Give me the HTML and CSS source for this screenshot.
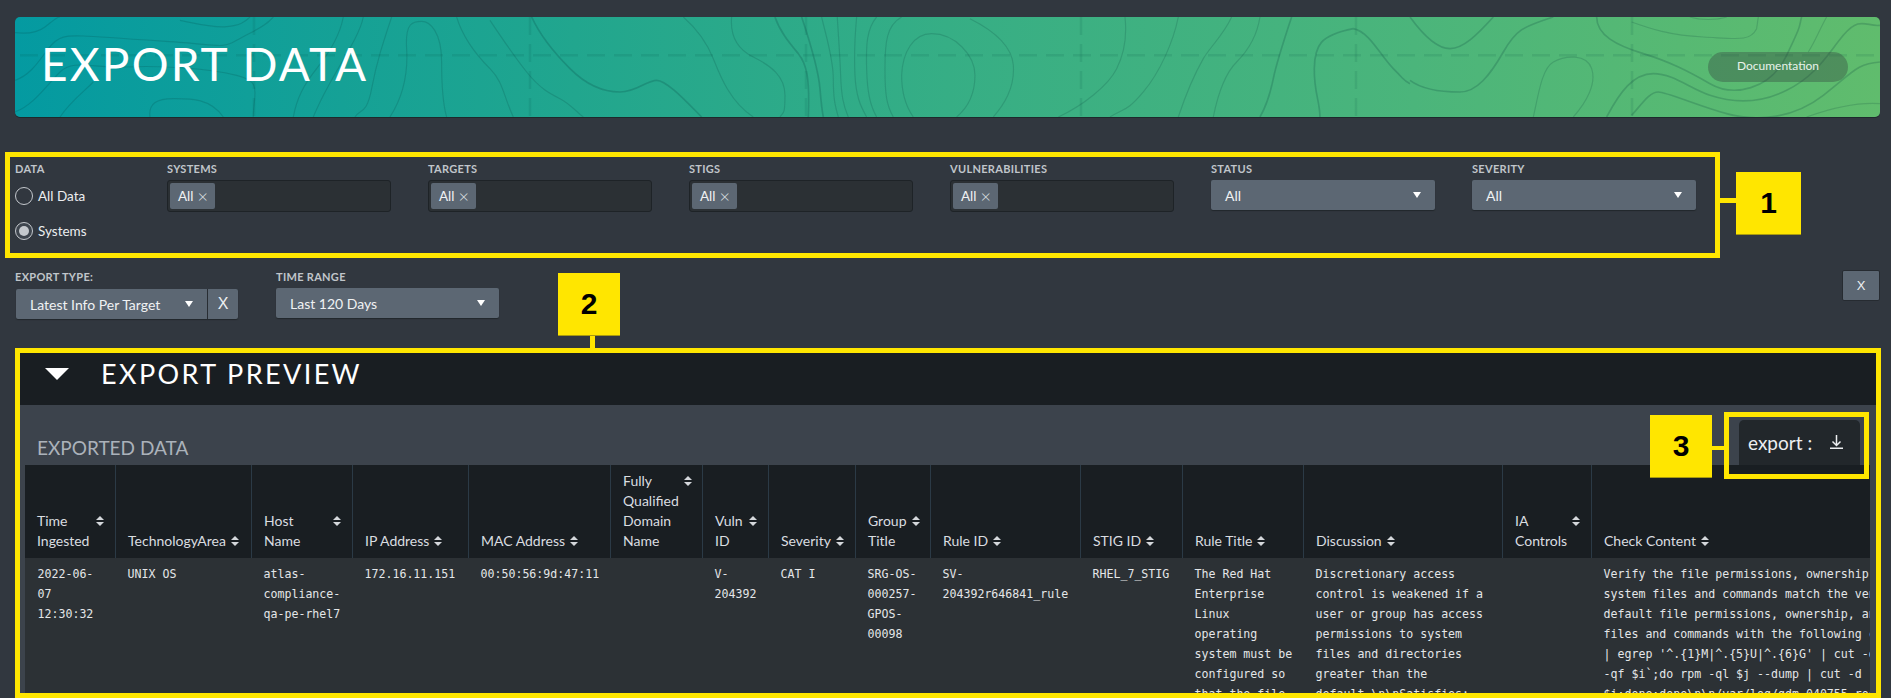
FILE: index.html
```html
<!DOCTYPE html>
<html lang="en">
<head>
<meta charset="utf-8">
<title>Export Data</title>
<link rel="stylesheet" href="styles.css">
</head>
<body>
<header class="banner">
  <svg class="topo" viewBox="0 0 1865 100" width="1865" height="100" aria-hidden="true">
    <g class="dash">
      <path d="M5 38.3H1860"/>
      <path d="M239 0V100M515 0V100M791 0V100M1066 0V100M1341 0V100M1617 0V100"/>
    </g>
    <g class="lines" transform="translate(-5 -5) scale(.3333)">
      <path d="M15 62C50 66 85 60 105 45S140 15 150 15"/>
      <path d="M15 205C60 190 85 150 115 110S170 70 220 72S420 85 520 92S640 110 680 85S760 50 790 15"/>
      <path d="M15 300C70 280 110 220 150 180S250 170 350 165S600 170 680 190S730 240 730 315"/>
      <path d="M510 25C560 35 610 48 650 44S705 30 720 15"/>
      <path d="M150 315C180 270 220 240 250 210"/>
      <path d="M420 315C415 275 440 260 490 260S600 258 640 315"/>
      <path d="M1000 15C990 70 960 120 920 170S860 260 850 315"/>
      <path d="M1060 15C1045 90 960 190 910 315"/>
      <path d="M1145 15C1120 90 1100 150 1085 230S1050 290 1035 315"/>
      <path d="M1140 315C1175 260 1195 190 1190 110S1210 28 1235 28S1295 60 1295 150S1300 280 1310 315"/>
      <path d="M1340 15C1360 80 1400 130 1440 170S1480 250 1510 315"/>
    </g>
    <g class="lines" transform="translate(475 -5) scale(.3333)">
      <path d="M0 25C40 85 70 130 110 180S180 245 210 260S260 300 280 315"/>
      <path class="bold" d="M125 15C150 70 190 120 240 170S340 240 390 240S470 205 500 205S590 270 635 315"/>
      <path d="M580 15C620 50 650 90 670 140S720 270 790 315"/>
      <path d="M725 15C720 70 740 110 790 135S885 190 885 250S880 300 870 315"/>
      <path class="bold" d="M855 15C870 60 900 95 925 125S960 200 955 315"/>
      <path class="bold" d="M935 15C960 90 985 170 990 230S995 290 1000 315"/>
      <path d="M995 15C1010 80 1030 140 1030 200S1035 280 1045 315"/>
      <path d="M1042 15C1045 70 1050 130 1052 190S1060 280 1075 315"/>
      <path d="M1100 15C1095 70 1092 130 1095 190S1110 280 1130 315"/>
      <path d="M1160 15C1130 50 1128 100 1130 170S1140 280 1160 315"/>
      <path d="M1235 15C1190 40 1185 90 1185 170S1190 280 1210 315"/>
      <path d="M1270 315C1245 280 1235 240 1235 190C1238 120 1270 65 1325 65C1395 65 1455 130 1455 190C1455 250 1430 290 1400 315"/>
    </g>
    <g class="lines" transform="translate(955 -5) scale(.3333)">
      <path d="M0 20C50 45 125 90 130 160S100 280 70 315"/>
      <path d="M465 15C470 60 465 120 440 170S340 280 265 315"/>
      <path d="M625 15C610 90 570 180 520 240S460 290 420 315"/>
      <path d="M785 15C760 70 720 105 700 140S650 240 625 315"/>
      <path d="M870 15C860 80 830 120 800 150S745 240 730 315"/>
      <path class="bold" d="M965 15C940 90 920 150 910 200S890 280 870 315"/>
      <path class="bold" d="M1050 315C1050 270 1032 240 1033 170S1050 70 1150 50C1200 60 1230 130 1270 170S1300 205 1320 215"/>
    </g>
    <g class="lines" transform="translate(1395 -5) scale(.3333)">
      <path class="bold" d="M0 205C40 235 100 240 150 240S240 190 280 120S340 45 430 15"/>
      <path class="bold" d="M0 15C40 70 80 110 120 110S200 70 250 15"/>
      <path d="M370 315C385 250 395 170 430 150S530 125 545 170S530 270 490 315"/>
      <path class="bold" d="M560 15C560 70 620 100 700 125S830 175 900 215S1080 235 1130 130S1165 50 1175 15"/>
      <path d="M665 30C720 50 780 70 880 75S1020 90 1040 50L1045 15"/>
      <path d="M840 15C870 25 920 25 950 15"/>
      <path class="bold" d="M590 315C630 240 670 185 730 185S840 230 900 250S1040 280 1130 235S1250 130 1300 70S1370 45 1410 40"/>
      <path class="bold" d="M665 310C700 270 720 240 745 240S860 280 950 305S1150 320 1240 250S1340 155 1410 150"/>
      <path d="M1250 15C1230 50 1215 90 1195 120"/>
      <path d="M1190 315C1260 290 1340 270 1410 275"/>
    </g>
  </svg>
  <h1 class="banner-title">EXPORT DATA</h1>
  <a class="doc-btn">Documentation</a>
</header>

<section class="filters">
  <div class="data-col">
    <div class="label">DATA</div>
    <label class="radio"><span class="ring"></span>All Data</label>
    <label class="radio"><span class="ring on"></span>Systems</label>
  </div>
  <div class="field">
    <div class="label">SYSTEMS</div>
    <div class="multi"><span class="tag">All <span class="tag-x">×</span></span></div>
  </div>
  <div class="field">
    <div class="label">TARGETS</div>
    <div class="multi"><span class="tag">All <span class="tag-x">×</span></span></div>
  </div>
  <div class="field">
    <div class="label">STIGS</div>
    <div class="multi"><span class="tag">All <span class="tag-x">×</span></span></div>
  </div>
  <div class="field">
    <div class="label">VULNERABILITIES</div>
    <div class="multi"><span class="tag">All <span class="tag-x">×</span></span></div>
  </div>
  <div class="field">
    <div class="label">STATUS</div>
    <div class="select"><span>All</span><i class="caret"></i></div>
  </div>
  <div class="field">
    <div class="label">SEVERITY</div>
    <div class="select"><span>All</span><i class="caret"></i></div>
  </div>
</section>

<section class="export-row">
  <div class="type-field">
    <div class="label">EXPORT TYPE:</div>
    <div class="joined">
      <div class="select type-select"><span>Latest Info Per Target</span><i class="caret"></i></div>
      <button class="clear">X</button>
    </div>
  </div>
  <div class="range-field">
    <div class="label">TIME RANGE</div>
    <div class="select"><span>Last 120 Days</span><i class="caret"></i></div>
  </div>
  <button class="close-all">X</button>
</section>

<section class="preview">
  <div class="preview-head">
    <svg class="preview-caret" viewBox="0 0 24 12" width="24" height="12" aria-hidden="true"><path d="M0 0H24L12 12Z"/></svg>
    <h2>EXPORT PREVIEW</h2>
  </div>
  <div class="panel">
    <div class="panel-head">
      <h3>EXPORTED DATA</h3>
      <button class="export-btn">export :
        <svg viewBox="0 0 15 14" width="15" height="14" aria-hidden="true"><path d="M7.5 0V10M3.5 6.5L7.5 10.5L11.5 6.5M1 13.2H14"/></svg>
      </button>
    </div>
    <div class="table-wrap">
      <table class="grid">
        <colgroup>
          <col class="c1"><col class="c2"><col class="c3"><col class="c4"><col class="c5"><col class="c6"><col class="c7"><col class="c8"><col class="c9"><col class="c10"><col class="c11"><col class="c12"><col class="c13"><col class="c14"><col class="c15">
        </colgroup>
        <thead>
          <tr>
            <th><div class="th"><span>Time<br>Ingested</span><svg class="sort" viewBox="0 0 8 10"><path d="M4 0L8 4H0ZM4 10L0 6H8Z"/></svg></div></th>
            <th><div class="th"><span>TechnologyArea</span><svg class="sort" viewBox="0 0 8 10"><path d="M4 0L8 4H0ZM4 10L0 6H8Z"/></svg></div></th>
            <th><div class="th"><span>Host<br>Name</span><svg class="sort" viewBox="0 0 8 10"><path d="M4 0L8 4H0ZM4 10L0 6H8Z"/></svg></div></th>
            <th><div class="th"><span>IP Address</span><svg class="sort" viewBox="0 0 8 10"><path d="M4 0L8 4H0ZM4 10L0 6H8Z"/></svg></div></th>
            <th><div class="th"><span>MAC Address</span><svg class="sort" viewBox="0 0 8 10"><path d="M4 0L8 4H0ZM4 10L0 6H8Z"/></svg></div></th>
            <th><div class="th"><span>Fully<br>Qualified<br>Domain<br>Name</span><svg class="sort" viewBox="0 0 8 10"><path d="M4 0L8 4H0ZM4 10L0 6H8Z"/></svg></div></th>
            <th><div class="th"><span>Vuln<br>ID</span><svg class="sort" viewBox="0 0 8 10"><path d="M4 0L8 4H0ZM4 10L0 6H8Z"/></svg></div></th>
            <th><div class="th"><span>Severity</span><svg class="sort" viewBox="0 0 8 10"><path d="M4 0L8 4H0ZM4 10L0 6H8Z"/></svg></div></th>
            <th><div class="th"><span>Group<br>Title</span><svg class="sort" viewBox="0 0 8 10"><path d="M4 0L8 4H0ZM4 10L0 6H8Z"/></svg></div></th>
            <th><div class="th"><span>Rule ID</span><svg class="sort" viewBox="0 0 8 10"><path d="M4 0L8 4H0ZM4 10L0 6H8Z"/></svg></div></th>
            <th><div class="th"><span>STIG ID</span><svg class="sort" viewBox="0 0 8 10"><path d="M4 0L8 4H0ZM4 10L0 6H8Z"/></svg></div></th>
            <th><div class="th"><span>Rule Title</span><svg class="sort" viewBox="0 0 8 10"><path d="M4 0L8 4H0ZM4 10L0 6H8Z"/></svg></div></th>
            <th><div class="th"><span>Discussion</span><svg class="sort" viewBox="0 0 8 10"><path d="M4 0L8 4H0ZM4 10L0 6H8Z"/></svg></div></th>
            <th><div class="th"><span>IA<br>Controls</span><svg class="sort" viewBox="0 0 8 10"><path d="M4 0L8 4H0ZM4 10L0 6H8Z"/></svg></div></th>
            <th><div class="th"><span>Check Content</span><svg class="sort" viewBox="0 0 8 10"><path d="M4 0L8 4H0ZM4 10L0 6H8Z"/></svg></div></th>
          </tr>
        </thead>
        <tbody>
          <tr>
            <td>2022-06-07 12:30:32</td>
            <td>UNIX OS</td>
            <td>atlas-compliance-qa-pe-rhel7</td>
            <td>172.16.11.151</td>
            <td>00:50:56:9d:47:11</td>
            <td></td>
            <td>V-204392</td>
            <td>CAT I</td>
            <td>SRG-OS-000257-GPOS-00098</td>
            <td>SV-204392r646841_rule</td>
            <td>RHEL_7_STIG</td>
            <td>The Red Hat Enterprise Linux operating system must be configured so that the file permissions, ownership, and group membership of system files and commands match the vendor values.</td>
            <td>Discretionary access control is weakened if a user or group has access permissions to system files and directories greater than the default.\n\nSatisfies: SRG-OS-000257-GPOS-00098</td>
            <td></td>
            <td class="check">Verify the file permissions, ownership, and group membership of<br>system files and commands match the vendor values.\n\nCheck the<br>default file permissions, ownership, and group membership of system<br>files and commands with the following command:\n\n# for i in `rpm -Va<br>| egrep '^.{1}M|^.{5}U|^.{6}G' | cut -d " " -f 4,5`;do for j in `rpm<br>-qf $i`;do rpm -ql $j --dump | cut -d " " -f 1,5,6,7 | grep<br>$i;done;done\n\n/var/log/gdm 040755 root root</td>
          </tr>
        </tbody>
      </table>
    </div>
  </div>
</section>

<div class="hl hl-filters"></div>
<div class="hl hl-preview"></div>
<div class="hl hl-export"></div>
<div class="wire wire-1"></div>
<div class="wire wire-2"></div>
<div class="wire wire-3"></div>
<div class="num num-1">1</div>
<div class="num num-2">2</div>
<div class="num num-3">3</div>
</body>
</html>
```

FILE: styles.css
```css
* { box-sizing: border-box; }
html, body { margin: 0; height: 698px; overflow: hidden; }
body {
  position: relative;
  background: #31373f;
  color: #e6e8ea;
  font-family: Lato, "Liberation Sans", sans-serif;
  font-size: 14px;
  padding: 17px 11px 0 15px;
}

/* banner */
.banner {
  position: relative;
  height: 100px;
  display: flex;
  align-items: center;
  justify-content: space-between;
  padding: 0 32px 0 26px;
  border-radius: 5px;
  overflow: hidden;
  background: linear-gradient(90deg, #049aa1 0%, #21a68e 30%, #36ae85 50%, #4bb57b 75%, #60bc6d 100%);
  box-shadow: 0 1px 0 #1d2a2c;
}
.topo { position: absolute; left: 0; top: 0; }
.topo path { fill: none; }
.dash path { stroke: rgba(0, 70, 60, .11); stroke-width: 2.5; stroke-dasharray: 18 9; }
.lines path { stroke: rgba(0, 55, 55, .17); stroke-width: 3.5; }
.lines path.bold { stroke-width: 5; stroke: rgba(0, 55, 55, .2); }
.banner-title {
  position: relative;
  margin: 0 0 7px;
  font-weight: 400;
  font-size: 46px;
  line-height: 50px;
  letter-spacing: 2.2px;
  color: #fff;
}
.doc-btn {
  position: relative;
  width: 140px;
  height: 30px;
  border-radius: 15px;
  background: rgba(50, 65, 60, .36);
  color: #e8f2ea;
  font-size: 12px;
  line-height: 28px;
  text-align: center;
}

/* filter rows */
.label {
  font-size: 11px;
  font-weight: 700;
  line-height: 14px;
  color: #c0c5ca;
  letter-spacing: .3px;
}
.filters {
  display: flex;
  margin-top: 45px;
  height: 101px;
}
.data-col { width: 152px; }
.radio {
  display: flex;
  align-items: center;
  gap: 5px;
  height: 18px;
  margin-top: 17px;
  font-size: 13.5px;
  color: #eceef0;
}
.data-col .label + .radio { margin-top: 11px; }
.ring {
  width: 18px;
  height: 18px;
  border: 1px solid #c4c8cd;
  border-radius: 50%;
  display: flex;
  align-items: center;
  justify-content: center;
}
.ring.on { background: #3e454e; }
.ring.on::after {
  content: "";
  width: 10px;
  height: 10px;
  border-radius: 50%;
  background: #c4c8cd;
}
.field { width: 224px; margin-right: 37px; }
.field .label { margin-bottom: 4px; }
.multi {
  height: 32px;
  padding: 2px;
  border: 1px solid #1e2327;
  border-radius: 3px;
  background: #2b3034;
}
.tag {
  display: inline-flex;
  align-items: center;
  gap: 4px;
  height: 26px;
  padding: 0 7px 0 8px;
  border-radius: 2px;
  background: #5c6773;
  color: #f0f2f3;
  font-size: 13.5px;
}
.tag-x { font-size: 18px; font-weight: 300; line-height: 26px; color: #dfe2e5; }
.select {
  display: flex;
  align-items: center;
  justify-content: space-between;
  height: 30px;
  margin-top: 1px;
  padding: 0 14px;
  border-radius: 2px;
  background: #5c6773;
  box-shadow: 0 1px 1px #22272c;
  color: #f0f2f3;
  font-size: 14px;
}
.caret {
  width: 0;
  height: 0;
  border-left: 4px solid transparent;
  border-right: 4px solid transparent;
  border-top: 6px solid #fff;
}
.export-row {
  display: flex;
  align-items: flex-start;
  margin-top: -1px;
  height: 91px;
}
.type-field { width: 261px; padding-top: 8px; }
.range-field { width: 223px; padding-top: 8px; }
.type-field .label, .range-field .label { margin-bottom: 4px; }
.joined { display: flex; margin-left: 1px; }
.type-select { width: 192px; margin-top: 1px; border-right: 1px solid #2a2f35; border-radius: 2px 0 0 2px; }
.clear {
  width: 30px;
  height: 30px;
  margin-top: 1px;
  padding: 0;
  border: 0;
  border-radius: 0 2px 2px 0;
  background: #5c6773;
  box-shadow: 0 1px 1px #22272c;
  color: #eef0f2;
  font: 400 16px "Liberation Sans", sans-serif;
}
.close-all {
  width: 38px;
  height: 31px;
  margin: 8px 0 0 auto;
  padding: 0;
  border: 1px solid #262b31;
  border-radius: 2px;
  background: #5c6773;
  color: #eef0f2;
  font: 400 13px "Liberation Sans", sans-serif;
}

/* preview */
.preview { margin: 0 0 0 5px; width: 1856px; }
.preview-head {
  display: flex;
  align-items: center;
  height: 52px;
  padding: 0 0 10px 25px;
  background: #191e22;
}
.preview-caret { fill: #fff; margin-right: 32px; }
.preview-head h2 {
  margin: 0;
  font-weight: 400;
  font-size: 27px;
  line-height: 32px;
  letter-spacing: 2.4px;
  color: #fff;
}
.panel { background: #3c434c; padding: 0 6px 0 5px; height: 400px; }
.panel-head {
  display: flex;
  justify-content: space-between;
  align-items: flex-end;
  height: 60px;
}
.panel-head h3 {
  margin: 0 0 6px 12px;
  font-weight: 400;
  font-size: 19px;
  line-height: 22px;
  color: #abb2ba;
}
.export-btn {
  display: flex;
  align-items: center;
  justify-content: space-between;
  width: 121px;
  height: 45px;
  margin-right: 10px;
  padding: 0 16px 1px 9px;
  border: 0;
  border-radius: 5px 5px 0 0;
  background: #22272b;
  color: #eceef0;
  font: 400 19px Lato, sans-serif;
}
.export-btn svg { fill: none; stroke: #eceef0; stroke-width: 1.5; }
.table-wrap { height: 340px; overflow: hidden; background: #2c3135; }
.grid { border-collapse: separate; border-spacing: 0; table-layout: fixed; width: 2445px; }
.c1 { width: 90px; } .c2 { width: 136px; } .c3 { width: 101px; } .c4 { width: 116px; }
.c5 { width: 142px; } .c6 { width: 92px; } .c7 { width: 66px; } .c8 { width: 87px; }
.c9 { width: 75px; } .c10 { width: 150px; } .c11 { width: 102px; } .c12 { width: 121px; }
.c13 { width: 199px; } .c14 { width: 89px; } .c15 { width: 879px; }
.grid th {
  height: 93px;
  padding: 6px 11px 7px 12px;
  vertical-align: bottom;
  text-align: left;
  font-weight: 400;
  font-size: 14px;
  line-height: 20px;
  color: #dadde0;
  background: #191e22;
  border-left: 1px solid #2b3a46;
}
.grid th:first-child { border-left: 0; }
.th { display: flex; gap: 5px; align-items: flex-start; }
.th > span { white-space: nowrap; }
.sort { flex: none; width: 8px; height: 10px; margin-top: 5px; fill: #d5d8dc; }
.th:has(br) .sort { margin-left: auto; }
.grid td {
  padding: 6px 9px 0 12.5px;
  vertical-align: top;
  font-family: "DejaVu Sans Mono", monospace;
  font-size: 11.6px;
  line-height: 20px;
  color: #e4e6e8;
}
.grid td.check { white-space: nowrap; }

/* annotations */
.hl { position: absolute; border: 5px solid #ffe600; pointer-events: none; }
.hl-filters { left: 5px; top: 152px; width: 1715px; height: 106px; }
.hl-preview { left: 15px; top: 348px; width: 1866px; height: 350px; }
.hl-export { left: 1724px; top: 412px; width: 145px; height: 67px; }
.wire { position: absolute; background: #ffe600; }
.wire-1 { left: 1720px; top: 198px; width: 16px; height: 5px; }
.wire-2 { left: 590px; top: 335px; width: 5px; height: 13px; }
.wire-3 { left: 1711px; top: 446px; width: 13px; height: 4px; }
.num {
  position: absolute;
  display: flex;
  align-items: center;
  justify-content: center;
  width: 62px;
  height: 62px;
  background: #ffe600;
  box-shadow: 0 1px 0 #a89a10;
  color: #000;
  font: 700 30px "Liberation Sans", sans-serif;
}
.num-1 { left: 1736px; top: 172px; width: 65px; }
.num-2 { left: 558px; top: 273px; }
.num-3 { left: 1650px; top: 415px; }
```
